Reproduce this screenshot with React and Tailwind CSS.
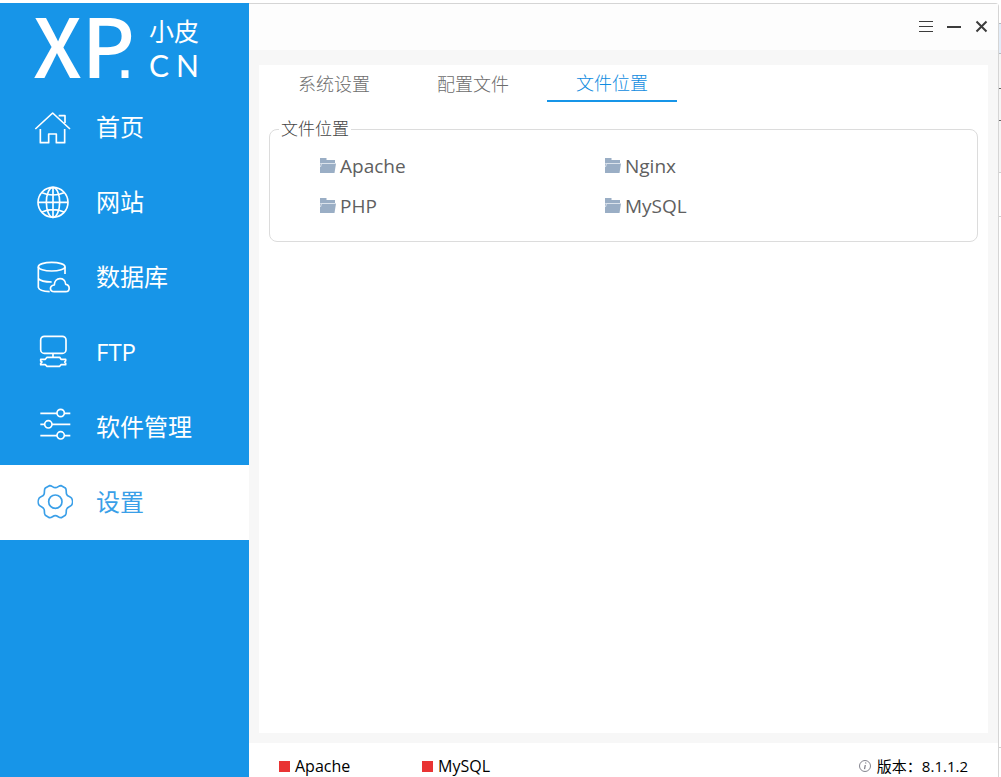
import { useState } from 'react';

const HomeIcon = () => (
    <>
        <path d="M7 66L59 18L111 66M77 26H96V48" />
        <path d="M22 66V107H47V81H70V107H95V66" />
    </>
);

const GlobeIcon = () => (
    <>
        <circle cx="60" cy="61" r="45" />
        <ellipse cx="60" cy="61" rx="20" ry="45" />
        <path d="M60 16V106M15 61H105M27 32Q60 46 93 32M27 90Q60 76 93 90" />
    </>
);

const DatabaseIcon = () => (
    <>
        <ellipse cx="56" cy="29" rx="40" ry="13" />
        <path d="M16 29V91C18 99 34 103 50 104M16 65C22 72 38 75 56 75M96 29V51" />
        <path d="M64 104C49 104 48 86 64 84C64 60 97 58 98 82C112 84 112 104 98 104Z" />
    </>
);

const FtpIcon = () => (
    <>
        <rect x="23" y="13" width="76" height="51" rx="11" />
        <path d="M60 64V76" />
        <path d="M42 76H80L84 82H98V87L95 90L98 94V98H84L80 103H42L37 98H23V94L27 90L23 87V82H37Z" />
    </>
);

const SlidersIcon = () => (
    <>
        <path d="M22 19H72M94 19H112M22 52H35M57 52H112M22 86H72M94 86H112" />
        <circle cx="83" cy="18" r="11" />
        <circle cx="46" cy="52" r="11" />
        <circle cx="83" cy="85" r="11" />
    </>
);

const GearIcon = () => (
    <g transform="translate(13 9)">
        <path d="M54 8C62 8 64 1 72 2L84 9C89 13 85 22 88 28C91 35 98 34 103 40C106 45 106 55 103 60C98 66 91 65 88 72C85 78 89 87 84 91L72 98C64 99 62 92 54 92C46 92 44 99 36 98L24 91C19 87 23 78 20 72C17 65 10 66 5 60C2 55 2 45 5 40C10 34 17 35 20 28C23 22 19 13 24 9L36 2C44 1 46 8 54 8Z" />
        <circle cx="54" cy="50" r="20" />
    </g>
);

const menu = [
    { id: 'home', label: '首页', icon: HomeIcon },
    { id: 'site', label: '网站', icon: GlobeIcon },
    { id: 'database', label: '数据库', icon: DatabaseIcon },
    { id: 'ftp', label: 'FTP', icon: FtpIcon },
    { id: 'software', label: '软件管理', icon: SlidersIcon },
    { id: 'settings', label: '设置', icon: GearIcon },
];

const tabs = ['系统设置', '配置文件', '文件位置'];
const locations = ['Apache', 'Nginx', 'PHP', 'MySQL'];
const services = ['Apache', 'MySQL'];

function Logo() {
    return (
        <div className="flex h-[87px] items-center pt-0.5 pl-[33px] text-white">
            <div className="flex w-[116px] items-baseline leading-[87px]">
                <span className="font-['Noto_Sans_CJK_SC'] text-[82px] font-medium">XP</span>
                <span className="-ml-5 font-['Liberation_Sans'] text-[72px]">.</span>
            </div>
            <div className="flex w-[50px] flex-col">
                <span className="text-[25px] leading-[34px]">小皮</span>
                <span className="flex justify-between font-['Lato'] text-[30px] leading-[34px]">
                    <span>C</span>
                    <span>N</span>
                </span>
            </div>
        </div>
    );
}

function Sidebar({ active, onSelect }) {
    return (
        <aside className="w-[249px] shrink-0 bg-[#1795e8]">
            <Logo />
            <nav>
                {menu.map(({ id, label, icon: Icon }) => (
                    <button
                        key={id}
                        type="button"
                        onClick={() => onSelect(id)}
                        className={`flex h-[75px] w-full items-center gap-[23px] pb-0.5 pl-[33px] text-2xl ${
                            active === id ? 'bg-white text-[#3a9fe8]' : 'text-white'
                        }`}
                    >
                        <svg
                            viewBox="0 0 120 120"
                            className="size-10 shrink-0"
                            fill="none"
                            stroke="currentColor"
                            strokeWidth="5"
                            strokeLinejoin="round"
                            aria-hidden="true"
                        >
                            <Icon />
                        </svg>
                        {label}
                    </button>
                ))}
            </nav>
        </aside>
    );
}

function TitleBar() {
    return (
        <header className="flex h-[46px] items-center justify-end gap-3 bg-[#fdfdfd] pr-2 text-[#3c3c3c]">
            <button type="button" aria-label="菜单">
                <svg width="16" height="16" stroke="currentColor" strokeWidth="1">
                    <path d="M1 2.5H15M1 7.5H15M1 12.5H15" />
                </svg>
            </button>
            <button type="button" aria-label="最小化">
                <svg width="16" height="16" stroke="currentColor" strokeWidth="2">
                    <path d="M1 8H15" />
                </svg>
            </button>
            <button type="button" aria-label="关闭">
                <svg width="16" height="16" stroke="currentColor" strokeWidth="2">
                    <path d="M2.500 2.500L12.500 12.500M12.500 2.500L2.500 12.500" />
                </svg>
            </button>
        </header>
    );
}

function FolderIcon() {
    return (
        <svg width="16" height="16" viewBox="0 0 16 16" aria-hidden="true">
            <path d="M0 0H6.500V2H15V5H0Z" fill="#9aaec5" />
            <path d="M0 3V15H14.500L16 5.500H0Z" fill="#9aaec5" />
            <path d="M0.500 9L1.500 5.500H15.500" fill="none" stroke="#dbe3ec" />
        </svg>
    );
}

function StatusBar() {
    return (
        <footer className="flex h-[34px] items-center bg-white pt-3 pr-[30px] pl-[30px] text-base text-black">
            {services.map((name) => (
                <div key={name} className="flex w-[143px] items-center gap-[5px]">
                    <span className="size-[11px] bg-[#e93434]" />
                    {name}
                </div>
            ))}
            <div className="ml-auto flex items-center gap-[5px] text-[15px]">
                <svg width="14" height="14" fill="none" stroke="#85858f" aria-hidden="true">
                    <circle cx="7" cy="7" r="5.500" />
                    <path d="M7.800 3.500L7.600 4.500M7.300 6L6.500 10.200" strokeWidth="1.300" />
                </svg>
                版本：8.1.1.2
            </div>
        </footer>
    );
}

export default function App() {
    const [page, setPage] = useState('settings');
    const [tab, setTab] = useState('文件位置');

    return (
        <div className="flex min-h-screen bg-white pt-[3px] font-['Open_Sans','Noto_Sans_CJK_SC',sans-serif]">
            <Sidebar active={page} onSelect={setPage} />

            <div className="flex min-w-0 flex-1 flex-col rounded-tr border-t border-r border-[#d5d5d5] bg-[#f7f7f7]">
                <TitleBar />

                <main className="mx-[10px] mt-[15px] mb-[10px] flex-1 bg-white px-[10px]">
                    <div role="tablist" className="flex gap-[9px]">
                        {tabs.map((name) => (
                            <button
                                key={name}
                                type="button"
                                role="tab"
                                aria-selected={tab === name}
                                onClick={() => setTab(name)}
                                className={`h-[37px] w-[130px] border-b-2 text-lg font-light ${
                                    tab === name
                                        ? 'border-[#1795e8] text-[#0f8ce0]'
                                        : 'border-transparent pt-0.5 text-[#6c6c6c]'
                                }`}
                            >
                                {name}
                            </button>
                        ))}
                    </div>

                    {/* File locations */}
                    <fieldset className="mt-[15px] rounded-lg border border-[#dcdcdc] px-[9px] pb-[15px]">
                        <legend className="px-[2px] text-[17px] leading-6 font-light text-[#444]">文件位置</legend>
                        <div className="grid grid-cols-[285px_285px] pt-[5px] pl-[41px]">
                            {locations.map((name) => (
                                <button
                                    key={name}
                                    type="button"
                                    className="flex h-10 items-center gap-1 text-[19px] text-[#606060]"
                                >
                                    <FolderIcon />
                                    {name}
                                </button>
                            ))}
                        </div>
                    </fieldset>
                </main>

                <StatusBar />
            </div>

            {/* Edge of the window behind */}
            <div className="flex w-[2px] shrink-0 flex-col bg-white pt-5">
                <div className="h-[31px] border-y border-[#b5bac0] bg-[#e3edf9]" />
                <div className="h-[35px] border-b border-[#666] bg-[#f5f5f5]" />
                <div className="h-8 border-b border-[#666] bg-[#f5f5f5]" />
                <div className="h-[52px] border-b border-[#d0d0d0] bg-[#f5f5f5]" />
                <div className="h-11 border-b border-[#d0d0d0]" />
                <div className="mb-[29px] flex-1 border-b border-[#d0d0d0]" />
            </div>
        </div>
    );
}
